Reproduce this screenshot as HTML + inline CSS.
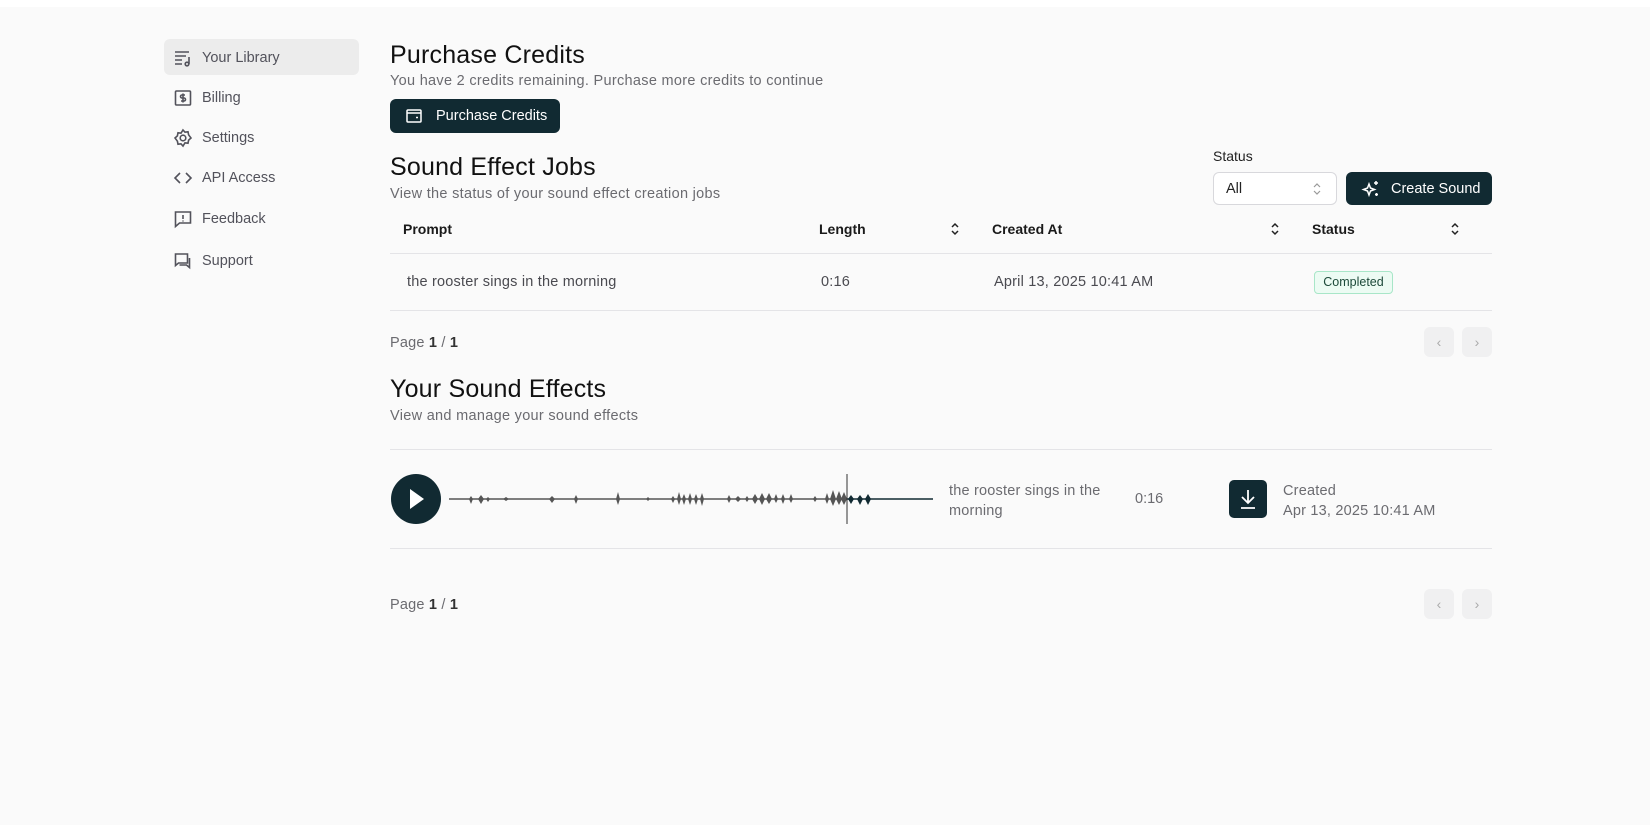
<!DOCTYPE html>
<html><head><meta charset="utf-8"><style>
*{box-sizing:border-box;margin:0;padding:0}
body{width:1650px;height:825px;background:#fafafa;font-family:"Liberation Sans",sans-serif;color:#111;position:relative;overflow:hidden}
.top{position:absolute;left:0;top:0;width:1650px;height:7px;background:#fff}
.a{position:absolute;white-space:nowrap}
.nav{position:absolute;left:164px;width:195px;height:36px;border-radius:6px;display:flex;align-items:center;padding-left:9px;font-size:14.5px;color:#52525b;padding-top:2px}
.nav svg{width:20px;height:20px;margin-right:9px;fill:none;stroke:#52525b;stroke-width:1.6}
.sel{background:#ececec}
h2{position:absolute;font-size:25px;font-weight:normal;color:#111;letter-spacing:.2px}
.sub{position:absolute;font-size:14.5px;color:#6b6b70;letter-spacing:.3px}
.btn{position:absolute;background:#112a32;color:#fff;border-radius:6px;font-size:14.5px;display:flex;align-items:center}
.th{position:absolute;top:221px;font-size:14px;font-weight:bold;color:#1a1a1a}
.sort{position:absolute;width:10px;height:16px}
.line{position:absolute;left:390px;width:1102px;height:1px;background:#e4e4e7}
.td{position:absolute;top:274px;font-size:14.5px;color:#4a4a50;letter-spacing:.2px}
.pg{position:absolute;font-size:14.5px;color:#6b6b70;letter-spacing:.2px}
.pg b{color:#333;font-weight:bold}
.pb{position:absolute;width:30px;height:30px;border-radius:6px;background:#f0f0f1;color:#aaa;font-size:14px;display:flex;align-items:center;justify-content:center}
</style></head><body>
<div class="top"></div>

<div class="nav sel" style="top:39px"><svg viewBox="0 0 20 20"><path d="M2 4h14M2 8h11M2 12h7M2 16h7"/><path d="M16 9v7"/><circle cx="14" cy="16" r="1.8"/></svg>Your Library</div>
<div class="nav" style="top:79px"><svg viewBox="0 0 20 20"><rect x="2.5" y="3" width="15" height="14" rx="1"/><path d="M12 7h-3a1.5 1.5 0 0 0 0 3h2a1.5 1.5 0 0 1 0 3H8M10 5.5v9"/></svg>Billing</div>
<div class="nav" style="top:119px"><svg viewBox="0 0 20 20"><path d="M10 2l2 2.2 3-.4.6 3L18 10l-2.4 2.2-.6 3-3-.4L10 18l-2-2.2-3 .4-.6-3L2 10l2.4-2.2.6-3 3 .4z"/><circle cx="10" cy="10" r="2.8"/></svg>Settings</div>
<div class="nav" style="top:159px"><svg viewBox="0 0 20 20"><path d="M7 5l-5 5 5 5M13 5l5 5-5 5"/></svg>API Access</div>
<div class="nav" style="top:200px"><svg viewBox="0 0 20 20"><path d="M2.5 3h15v11h-11l-4 3.5z"/><path d="M10 6v4M10 11.5v1"/></svg>Feedback</div>
<div class="nav" style="top:242px"><svg viewBox="0 0 20 20"><path d="M2.5 3h12v9h-9l-3 2.5z"/><path d="M16.5 7v9.5l-3-2.5h-7"/></svg>Support</div>

<h2 style="left:390px;top:41px">Purchase Credits</h2>
<div class="sub" style="left:390px;top:73px">You have 2 credits remaining. Purchase more credits to continue</div>
<div class="btn" style="left:390px;top:99px;width:170px;height:34px;padding-left:15px"><svg width="18" height="18" viewBox="0 0 18 18" fill="none" stroke="#fff" stroke-width="1.5" style="margin-right:13px"><rect x="2" y="3" width="14" height="12" rx="1"/><path d="M2 6h14M11 10.5h2"/></svg>Purchase Credits</div>

<h2 style="left:390px;top:153px">Sound Effect Jobs</h2>
<div class="sub" style="left:390px;top:186px">View the status of your sound effect creation jobs</div>
<div class="a" style="left:1213px;top:148px;font-size:14px;color:#222">Status</div>
<div class="a" style="left:1213px;top:172px;width:124px;height:33px;border:1px solid #d8d8dc;border-radius:6px;background:#fff;font-size:14.5px;padding:8px 0 0 12px;color:#222">All<svg style="position:absolute;right:14px;top:9px" width="10" height="14" viewBox="0 0 10 14" fill="none" stroke="#999" stroke-width="1.2"><path d="M2 5l3-3 3 3M2 9l3 3 3-3"/></svg></div>
<div class="btn" style="left:1346px;top:172px;width:146px;height:33px;padding-left:15px"><svg width="20" height="20" viewBox="0 0 20 20" fill="none" stroke="#fff" stroke-width="1.5" style="margin-right:10px"><path d="M8 5l1.5 4 4 1.5-4 1.5L8 16l-1.5-4-4-1.5 4-1.5z"/><path d="M15 2v4M13 4h4M15.5 14v3M14 15.5h3"/></svg>Create Sound</div>

<div class="th" style="left:403px">Prompt</div>
<div class="th" style="left:819px">Length</div>
<div class="th" style="left:992px">Created At</div>
<div class="th" style="left:1312px">Status</div>
<svg class="sort" style="left:950px;top:221px" viewBox="0 0 10 16" fill="none" stroke="#222" stroke-width="1.5"><path d="M2 6l3-3 3 3M2 10l3 3 3-3"/></svg>
<svg class="sort" style="left:1270px;top:221px" viewBox="0 0 10 16" fill="none" stroke="#222" stroke-width="1.5"><path d="M2 6l3-3 3 3M2 10l3 3 3-3"/></svg>
<svg class="sort" style="left:1450px;top:221px" viewBox="0 0 10 16" fill="none" stroke="#222" stroke-width="1.5"><path d="M2 6l3-3 3 3M2 10l3 3 3-3"/></svg>
<div class="line" style="top:253px"></div>
<div class="td" style="left:407px">the rooster sings in the morning</div>
<div class="td" style="left:821px">0:16</div>
<div class="td" style="left:994px">April 13, 2025 10:41 AM</div>
<div class="a" style="left:1314px;top:271px;width:79px;height:23px;border:1px solid #a8e6c8;background:#ecfbf3;border-radius:4px;font-size:12.5px;color:#1d4a3a;text-align:center;line-height:21px">Completed</div>
<div class="line" style="top:310px"></div>

<div class="pg" style="left:390px;top:335px">Page <b>1</b> / <b>1</b></div>
<div class="pb" style="left:1424px;top:327px">‹</div>
<div class="pb" style="left:1462px;top:327px">›</div>

<h2 style="left:390px;top:375px">Your Sound Effects</h2>
<div class="sub" style="left:390px;top:408px">View and manage your sound effects</div>
<div class="line" style="top:449px"></div>

<svg class="a" style="left:391px;top:474px" width="50" height="50" viewBox="0 0 50 50"><circle cx="25" cy="25" r="25" fill="#112a32"/><path d="M19 15l14 10-14 10z" fill="#fff"/></svg>
<svg class="a" style="left:449px;top:474px" width="485" height="50" viewBox="449 474 485 50">
<line x1="449" y1="499" x2="847" y2="499" stroke="#555" stroke-width="1.5"/>
<line x1="847" y1="499" x2="933" y2="499" stroke="#112a32" stroke-width="1.5"/>
<g fill="#555">
<path d="M471 496l2 3-2 5-2-5z"/><path d="M481 495l3 4-3 5-3-5z"/><path d="M488 497l2 2-2 3-2-3z"/><path d="M506 497l3 2-3 2-3-2z"/>
<path d="M552 496l3 3-3 4-3-4z"/><path d="M576 495l2 4-2 5-2-5z"/><path d="M618 492l2 7-2 6-2-6z"/><path d="M648 497l2 2-2 2-2-2z"/>
<path d="M673 496l2 3-2 4-2-4z"/><path d="M679 492l2 7-2 6-2-6z"/><path d="M684 494l2 5-2 6-2-6z"/><path d="M690 493l2 6-2 6-2-6z"/><path d="M696 494l2 5-2 6-2-6z"/><path d="M702 493l2 6-2 7-2-7z"/>
<path d="M729 495l2 4-2 4-2-4z"/><path d="M738 496l3 3-3 3-3-3z"/><path d="M747 496l2 3-2 3-2-3z"/><path d="M755 494l3 5-3 5-3-5z"/><path d="M762 493l3 6-3 6-3-6z"/><path d="M769 493l3 6-3 5-3-5z"/><path d="M776 494l2 5-2 4-2-4z"/><path d="M783 494l2 5-2 5-2-5z"/><path d="M791 494l2 5-2 4-2-4z"/>
<path d="M815 496l2 3-2 3-2-3z"/><path d="M827 493l2 6-2 5-2-5z"/><path d="M833 490l3 9-3 7-3-7z"/><path d="M839 491l3 8-3 6-3-6z"/><path d="M844 492l3 7-3 6-3-6z"/>
</g>
<g fill="#112a32"><path d="M851 495l3 4-3 5-3-5z"/><path d="M860 495l3 4-3 6-3-6z"/><path d="M868 494l3 5-3 6-3-6z"/></g>
<line x1="847" y1="474" x2="847" y2="524" stroke="#333" stroke-width="1"/>
</svg>
<div class="a" style="left:949px;top:481px;font-size:14.5px;color:#6b6b70;line-height:20px;letter-spacing:.2px">the rooster sings in the<br>morning</div>
<div class="a" style="left:1135px;top:491px;font-size:14.5px;color:#6b6b70">0:16</div>
<div class="a" style="left:1229px;top:480px;width:38px;height:38px;background:#112a32;border-radius:5px"><svg width="38" height="38" viewBox="0 0 38 38" fill="none" stroke="#fff" stroke-width="1.8"><path d="M19 10v13M13 17l6 6 6-6M12 28h14"/></svg></div>
<div class="a" style="left:1283px;top:481px;font-size:14.5px;color:#6b6b70;line-height:20px;letter-spacing:.2px">Created<br>Apr 13, 2025 10:41 AM</div>
<div class="line" style="top:548px"></div>

<div class="pg" style="left:390px;top:597px">Page <b>1</b> / <b>1</b></div>
<div class="pb" style="left:1424px;top:589px">‹</div>
<div class="pb" style="left:1462px;top:589px">›</div>
</body></html>
